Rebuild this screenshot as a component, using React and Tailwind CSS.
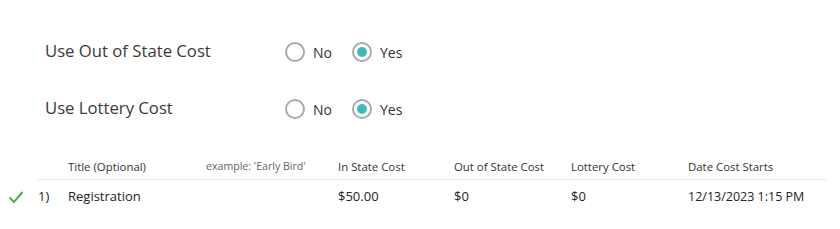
import React from "react";

function Radio({ checked, label }) {
  return (
    <label className="flex items-center gap-[8px]">
      <span className="w-[20px] h-[20px] rounded-full border-2 border-[#a9a9a9] flex items-center justify-center">
        {checked && <span className="w-[10px] h-[10px] rounded-full bg-[#3bbcbc]" />}
      </span>
      <span className="text-[14px] text-[#333]">{label}</span>
    </label>
  );
}

function OptionRow({ label }) {
  return (
    <div className="flex items-center h-[30px]">
      <div className="w-[240px] text-[16.7px] text-[#3a3a3a] -mt-[3px]">{label}</div>
      <div className="flex items-center gap-[20px]">
        <Radio label="No" />
        <Radio label="Yes" checked />
      </div>
    </div>
  );
}

export default function App() {
  return (
    <div className="w-[840px] h-[229px] bg-white overflow-hidden" style={{ fontFamily: '"Open Sans", "Noto Sans", sans-serif' }}>
      <div className="pl-[45px] pt-[37px] flex flex-col gap-[27px]">
        <OptionRow label="Use Out of State Cost" />
        <OptionRow label="Use Lottery Cost" />
      </div>
      <div className="mt-[30px]">
        <div className="flex items-center text-[11.4px] text-[#333] ml-[38px] mr-[14px] h-[26px] border-b border-[#e6e6e6]">
          <div className="w-[30px]" />
          <div className="w-[138px]">Title (Optional)</div>
          <div className="w-[132px] text-[10.6px] text-[#666]">example: 'Early Bird'</div>
          <div className="w-[116px]">In State Cost</div>
          <div className="w-[117px]">Out of State Cost</div>
          <div className="w-[117px]">Lottery Cost</div>
          <div>Date Cost Starts</div>
        </div>
        <div className="flex items-center text-[13px] text-[#222] h-[34px]">
          <div className="w-[38px] flex justify-center pr-[6px]">
            <svg width="16" height="14" viewBox="0 0 16 14" fill="none">
              <path d="M1.5 7.5 L6 12 L14.5 2" stroke="#4caf50" strokeWidth="2" />
            </svg>
          </div>
          <div className="w-[30px]">1)</div>
          <div className="w-[270px]">Registration</div>
          <div className="w-[116px]">$50.00</div>
          <div className="w-[117px]">$0</div>
          <div className="w-[117px]">$0</div>
          <div className="text-[12.5px]">12/13/2023 1:15 PM</div>
        </div>
      </div>
    </div>
  );
}
